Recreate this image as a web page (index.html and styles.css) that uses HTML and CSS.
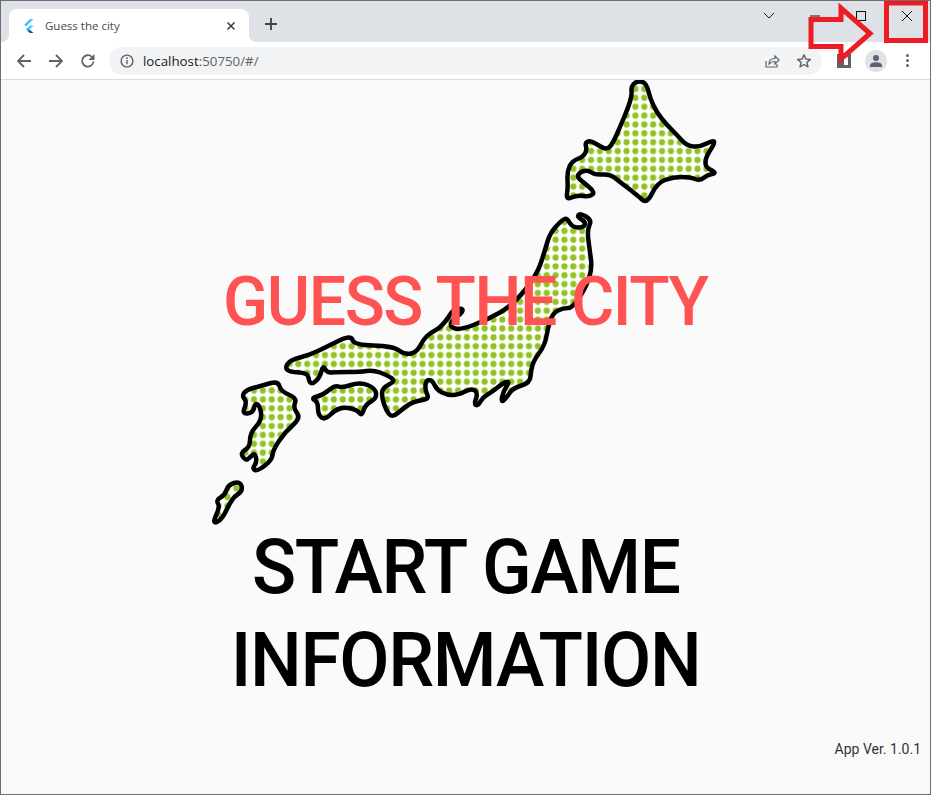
FILE: index.html
```html
<!DOCTYPE html>
<html lang="en">
<head>
    <meta charset="UTF-8">
    <title>Guess the city</title>
    <link rel="stylesheet" href="styles.css">
</head>
<body>
<div class="window">
    <!-- tab strip -->
    <div class="tabstrip">
        <div class="tab">
            <svg class="favicon" viewBox="0 0 12 14" width="12" height="14">
                <polygon points="7,0 10.5,0 3,7.5 1.2,5.8" fill="#47c5fb"/>
                <polygon points="7,6.5 10.5,6.5 6.5,10.5 4.8,8.8" fill="#47c5fb"/>
                <polygon points="4.8,12.2 6.5,10.5 10.5,14 7,14" fill="#00569e"/>
                <polygon points="3,10.5 4.8,8.8 6.5,10.5 4.8,12.2" fill="#00b5f8"/>
            </svg>
            <span class="tab-title">Guess the city</span>
            <svg class="tab-close" viewBox="0 0 10 10" width="10" height="10">
                <path d="M1.5 1.5l7 7M8.5 1.5l-7 7" stroke="#3c4043" stroke-width="1.6" fill="none"/>
            </svg>
        </div>
        <svg class="new-tab" viewBox="0 0 14 14" width="14" height="14">
            <path d="M7 1v12M1 7h12" stroke="#3c4043" stroke-width="1.8" fill="none"/>
        </svg>
        <div class="win-controls">
            <svg class="win-btn" viewBox="0 0 46 12" width="46" height="12"><path d="M18 3l5 5 5-5" stroke="#222" fill="none"/></svg>
            <svg class="win-btn" viewBox="0 0 46 12" width="46" height="12"><path d="M18 6h10" stroke="#111" fill="none"/></svg>
            <svg class="win-btn" viewBox="0 0 46 12" width="46" height="12"><rect x="18.5" y="1.5" width="9" height="9" stroke="#111" fill="none"/></svg>
            <svg class="win-btn" viewBox="0 0 46 12" width="46" height="12"><path d="M18 1l10 10M28 1L18 11" stroke="#111" fill="none"/></svg>
        </div>
    </div>

    <!-- toolbar -->
    <div class="toolbar">
        <svg class="tool" viewBox="0 0 16 16" width="16" height="16"><path d="M15 8H2M8 2L2 8l6 6" stroke="#5f6368" stroke-width="1.8" fill="none"/></svg>
        <svg class="tool" viewBox="0 0 16 16" width="16" height="16"><path d="M1 8h13M8 2l6 6-6 6" stroke="#5f6368" stroke-width="1.8" fill="none"/></svg>
        <svg class="tool" viewBox="0 0 16 16" width="16" height="16"><path d="M13.5 8.5A5.7 5.7 0 1 1 11.8 3.8" stroke="#5f6368" stroke-width="1.8" fill="none"/><polygon points="14.5,1 14.5,7 8.5,7" fill="#5f6368"/></svg>
        <div class="omnibox">
            <svg class="info" viewBox="0 0 14 14" width="14" height="14">
                <circle cx="7" cy="7" r="5.9" stroke="#5f6368" stroke-width="1.4" fill="none"/>
                <path d="M7 6v4.2" stroke="#5f6368" stroke-width="1.4"/>
                <circle cx="7" cy="4.2" r="0.9" fill="#5f6368"/>
            </svg>
            <span class="url"><b>localhost</b>:50750/#/</span>
            <svg class="omni-icon" viewBox="0 0 16 16" width="16" height="16">
                <path d="M2 8v6h11v-3" stroke="#5f6368" stroke-width="1.2" fill="none"/>
                <path d="M5 11c0-4 3-5.500 6-5.500V3l4 4-4 4V8.500c-3 0-4.500 1-6 2.500z" stroke="#5f6368" stroke-width="1.2" fill="none"/>
            </svg>
            <svg class="omni-icon" viewBox="0 0 16 16" width="16" height="16">
                <polygon points="8,1.800 9.800,6 14.400,6.400 10.900,9.400 12,13.900 8,11.500 4,13.900 5.100,9.400 1.600,6.400 6.200,6" stroke="#5f6368" stroke-width="1.400" stroke-linejoin="round" fill="none"/>
            </svg>
        </div>
        <span class="ext-icon"></span>
        <span class="avatar">
            <svg viewBox="0 0 14 14" width="14" height="14">
                <circle cx="7" cy="4" r="3" fill="#5a6270"/>
                <path d="M1 13v-1.500C1 9.500 4 8.300 7 8.300s6 1.200 6 3.200V13z" fill="#5a6270"/>
            </svg>
        </span>
        <span class="kebab"><i></i><i></i><i></i></span>
    </div>

    <!-- page -->
    <div class="page">
        <div class="hero">
            <svg class="map" viewBox="200 80 531 447" width="531" height="447">
                <defs>
                    <pattern id="dots" patternUnits="userSpaceOnUse" x="249.565" y="84.565" width="8.87" height="8.87">
                        <rect width="8.87" height="8.87" fill="#fff"/>
                        <circle cx="4.435" cy="4.435" r="3.1" fill="#8fc31f"/>
                    </pattern>
                </defs>
                <g class="islands">
                    <!-- hokkaido -->
                    <path d="M630,101.500 Q632,95 631.500,91 Q631,87 633.500,84.250 Q636,81.500 639.750,81.500 Q643.500,81.500 645.500,84.250 Q647.500,87 648.750,92.500 Q650,98 653.500,105.500 Q657,113 662,119 Q667,125 672,130 Q677,135 682,140.500 Q687,146 693.500,146.500 Q700,147 706.500,143.500 Q713,140 714,141.500 Q715,143 711,149 Q707,155 706,159 Q705,163 706,165.500 Q707,168 712,170.500 Q717,173 712,174 Q707,175 703.500,178 Q700,181 695,179 Q690,177 681.500,177 Q673,177 665,180 Q657,183 652,193.500 Q647,204 642,199.500 Q637,195 628.500,188.500 Q620,182 615,178 Q610,174 602.500,174.500 Q595,175 591.500,172.500 Q588,170 584,171 Q580,172 578.500,174.500 Q577,177 580,179.500 Q583,182 589,187 Q595,192 592.500,194.500 Q590,197 583.500,196 Q577,195 571.500,197.500 Q566,200 567,194 Q568,188 567.500,180 Q567,172 569.500,166.500 Q572,161 577.500,159 Q583,157 585,153.500 Q587,150 586,146.500 Q585,143 587.500,141.750 Q590,140.500 594,142.750 Q598,145 602.500,147.500 Q607,150 610,146.500 Q613,143 616.500,135 Q620,127 624,117.500 Q628,108 630,101.500Z"/>
                    <!-- honshu -->
                    <path d="M578.500,215 Q580,213 586,216.500 Q592,220 589.500,225 Q587,230 588.500,241 Q590,252 591,260 Q592,268 589.500,276.500 Q587,285 580,296.500 Q573,308 568,308 Q563,308 558,310.500 Q553,313 550.500,320 Q548,327 546.500,336 Q545,345 539.500,352.500 Q534,360 532.500,365 Q531,370 530.500,376.500 Q530,383 521.500,385.500 Q513,388 510,392.500 Q507,397 504,400 Q501,403 502,397.500 Q503,392 506.500,386.500 Q510,381 506.500,382 Q503,383 497.500,387.500 Q492,392 487.500,394.500 Q483,397 480.500,401.500 Q478,406 476,405 Q474,404 476,398.500 Q478,393 475,390.500 Q472,388 465,391.500 Q458,395 452.500,395 Q447,395 442,392.500 Q437,390 434.500,385 Q432,380 429,380 Q426,380 425.500,385 Q425,390 427,394 Q429,398 426,399 Q423,400 418,401 Q413,402 409,404.500 Q405,407 398.500,412.500 Q392,418 389,414 Q386,410 384,404 Q382,398 382,393 Q382,388 389,384.500 Q396,381 391.500,378 Q387,375 380,372.500 Q373,370 366.500,371 Q360,372 348.500,372 Q337,372 332,372.500 Q327,373 325,369 Q323,365 321.500,371 Q320,377 316.500,380.500 Q313,384 311,383 Q309,382 308.500,377.500 Q308,373 299,372.500 Q290,372 287.500,370 Q285,368 287.500,364 Q290,360 300,357.500 Q310,355 320,350 Q330,345 340.500,340 Q351,335 352.500,340 Q354,345 373.500,345.500 Q393,346 399,350.500 Q405,355 411,353.500 Q417,352 420,346 Q423,340 426.500,336.500 Q430,333 435,330.500 Q440,328 444,323 Q448,318 450.500,314 Q453,310 458,309 Q463,308 462.500,310.500 Q462,313 457,316.500 Q452,320 451,323.500 Q450,327 455,328.500 Q460,330 473.500,325 Q487,320 500,312.500 Q513,305 525,290 Q537,275 541,262.500 Q545,250 547.500,241.500 Q550,233 556,226.500 Q562,220 564.500,219 Q567,218 569.500,222.500 Q572,227 577.500,227.500 Q583,228 584.500,225 Q586,222 581.500,219.500 Q577,217 578.500,215Z"/>
                    <!-- shikoku -->
                    <path d="M317,396.500 Q323,395 329,390 Q335,385 338.500,386.500 Q342,388 351,385 Q360,382 367.500,385 Q375,388 376,393 Q377,398 371,401.500 Q365,405 363.500,410.500 Q362,416 359.500,413 Q357,410 351,408.500 Q345,407 340,408.500 Q335,410 330,415 Q325,420 321.500,417.500 Q318,415 318,408.500 Q318,402 314.500,400 Q311,398 317,396.500Z"/>
                    <!-- kyushu -->
                    <path d="M244,393 Q246,390 254,387.750 Q262,385.500 270,383.250 Q278,381 279.500,386.250 Q281,391.500 289,394.750 Q297,398 295,403 Q293,408 297,413 Q301,418 293,425 Q285,432 279,441 Q273,450 272.500,455 Q272,460 265,465.500 Q258,471 255,470 Q252,469 254.500,465.500 Q257,462 256,457.500 Q255,453 252.500,455 Q250,457 248,459 Q246,461 243,457 Q240,453 245,450 Q250,447 250,440 Q250,433 256,426.500 Q262,420 261,413 Q260,406 257.500,404.500 Q255,403 254,408 Q253,413 247.500,413.500 Q242,414 244.500,408 Q247,402 244.500,399 Q242,396 244,393Z"/>
                    <!-- tanegashima -->
                    <path d="M226.500,490 Q228,485 234,483 Q240,481 241.500,486 Q243,491 237.500,494.500 Q232,498 227,509 Q222,520 217,522 Q212,524 216,515.500 Q220,507 218,503.500 Q216,500 220.500,497.500 Q225,495 226.500,490Z"/>
                </g>
            </svg>
            <h1 class="title">GUESS THE CITY</h1>
        </div>
        <div class="menu">
            <a class="menu-item" href="#">START GAME</a>
            <a class="menu-item" href="#">INFORMATION</a>
        </div>
        <div class="version">App Ver. 1.0.1</div>
    </div>

    <!-- red marks drawn over the screenshot -->
    <svg class="marks" viewBox="0 0 931 795" width="931" height="795">
        <polygon points="811,19.500 841,19.500 841,8 870,33.500 841,59 841,46.500 811,46.500" fill="none" stroke="#ed1c24" stroke-width="5"/>
        <rect x="886.500" y="3" width="39" height="37.500" fill="none" stroke="#ed1c24" stroke-width="5"/>
    </svg>
</div>
</body>
</html>
```

FILE: styles.css
```css
*{box-sizing:border-box}
html,body{margin:0;padding:0}
body{font-family:Roboto,"Liberation Sans",sans-serif;color:#000}
a{text-decoration:none;color:inherit}

.window{
    position:relative;
    width:931px;
    height:795px;
    border:1px solid #6a6e73;
    display:flex;
    flex-direction:column;
    overflow:hidden;
}

/* tab strip */
.tabstrip{
    height:41px;
    background:#dee1e6;
    display:flex;
    align-items:flex-end;
    padding-left:8px;
}
.tab{
    position:relative;
    width:240px;
    height:33px;
    background:#fff;
    border-radius:8px 8px 0 0;
    display:flex;
    align-items:center;
    padding:0 13px 0 14px;
}
.tab::before,.tab::after{
    content:"";
    position:absolute;
    bottom:0;
    width:8px;
    height:8px;
}
.tab::before{
    left:-8px;
    background:radial-gradient(circle at 0 0,transparent 8px,#fff 8.5px);
}
.tab::after{
    right:-8px;
    background:radial-gradient(circle at 100% 0,transparent 8px,#fff 8.5px);
}
.favicon{margin-right:10px}
.tab-title{
    flex:1;
    font:11.5px "Open Sans","Liberation Sans",sans-serif;
    color:#45494e;
}
.new-tab{margin:0 0 11px 15px}
.win-controls{
    margin-left:auto;
    align-self:flex-start;
    display:flex;
    padding:9px 0 0;
}
.win-btn{display:block}

/* toolbar */
.toolbar{
    height:38px;
    background:#fff;
    border-bottom:1px solid #dadce0;
    display:flex;
    align-items:center;
    padding-left:15px;
}
.tool{margin-right:16px}
.omnibox{
    width:713px;
    height:28px;
    margin-left:-3px;
    background:#f1f3f4;
    border-radius:14px;
    display:flex;
    align-items:center;
    padding:0 10px 0 11px;
}
.info{margin-right:9px}
.url{
    flex:1;
    font:13.3px "Open Sans","Liberation Sans",sans-serif;
    color:#5f6368;
}
.url b{font-weight:normal;color:#202124}
.omni-icon{margin-left:16px}
.ext-icon{
    width:14px;
    height:14px;
    margin-left:15px;
    background:#5f6368;
    border:3px solid #5f6368;
    border-left-width:7px;
    box-shadow:inset 0 0 0 10px #fff;
}
.avatar{
    width:22px;
    height:22px;
    margin-left:14px;
    border-radius:50%;
    background:#dfe1e7;
    display:flex;
    align-items:center;
    justify-content:center;
}
.kebab{
    margin-left:19px;
    display:flex;
    flex-direction:column;
    gap:2px;
}
.kebab i{
    width:3px;
    height:3px;
    border-radius:50%;
    background:#5f6368;
}

/* page */
.page{
    flex:1;
    background:#fafafa;
    display:flex;
    flex-direction:column;
}
.hero{
    display:grid;
    justify-items:center;
    align-items:center;
}
.map{grid-area:1/1;display:block}
.islands path{
    fill:url(#dots);
    stroke:#000;
    stroke-width:4.5;
    stroke-linejoin:round;
}
.title{
    grid-area:1/1;
    margin:0 0 4px;
    font-size:69px;
    font-weight:500;
    line-height:75px;
    letter-spacing:-1.5px;
    color:#ff5252;
    transform:scaleX(.96);
}
.menu{
    display:flex;
    flex-direction:column;
    align-items:center;
    gap:13px;
}
.menu-item{
    font-size:76px;
    font-weight:500;
    line-height:80px;
    letter-spacing:-1.4px;
    transform:scaleX(.96);
}
.version{
    margin-top:auto;
    padding:0 9px 35px 0;
    text-align:right;
    font-size:14px;
    line-height:20px;
    color:#333;
}

.marks{
    position:absolute;
    left:-1px;
    top:-1px;
    pointer-events:none;
}
```
